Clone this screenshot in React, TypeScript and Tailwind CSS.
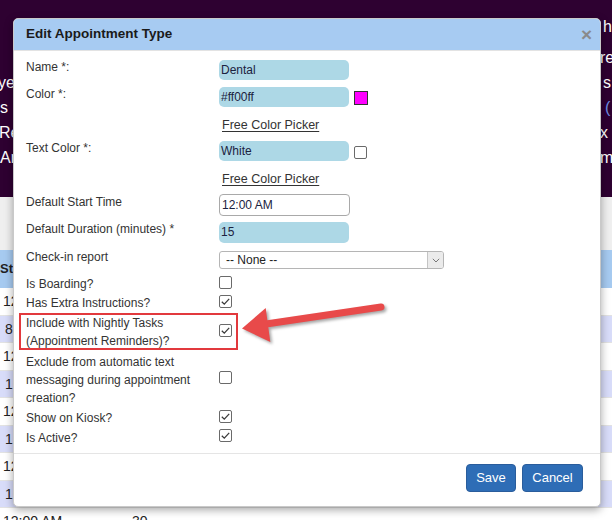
import React from 'react';

const Box: React.FC<{ checked?: boolean }> = ({ checked }) => (
    <svg width="13" height="13" viewBox="0 0 13 13" className="block">
        <rect x="0.5" y="0.5" width="12" height="12" rx="1.5" fill="#fff" stroke="#6a6a6a" />
        {checked && <path d="M2.8 6.7 L5.3 9.1 L10.2 3.9" fill="none" stroke="#3a3a3a" strokeWidth="1.3" />}
    </svg>
);

const Row: React.FC<{ label: React.ReactNode; h: string; children?: React.ReactNode }> = ({ label, h, children }) => (
    <div className={`flex items-start ${h}`}>
        <div className="w-[193px] shrink-0 text-[12px] leading-[18px] text-[#333]">{label}</div>
        {children}
    </div>
);

const PickerLink = () => (
    <div className="h-[27px] pl-[196px] pt-[4px]">
        <span className="block text-[12.5px] leading-[18px] text-[#333] underline underline-offset-2">Free Color Picker</span>
    </div>
);

const rows = ['12', '8', '12', '12', '12', '12', '12', '12'];

export default function App() {
    return (
        <div className="relative h-[520px] w-[612px] overflow-hidden bg-white font-['Liberation_Sans',Arial,sans-serif]">
            {/* page behind the dialog */}
            <div className="flex h-[197px] justify-between bg-[#2e0131] text-[16px] leading-[25px] text-white">
                <div className="w-[13px] overflow-hidden whitespace-nowrap pt-[70px]">
                    <div className="-ml-[2px]">yes</div>
                    <div>s</div>
                    <div className="-ml-[1px]">Re</div>
                    <div>An</div>
                </div>
                <div className="w-[11px] overflow-hidden whitespace-nowrap">
                    <div className="mt-[14px] pl-[2px]">h</div>
                    <div className="mt-[6px] -ml-[1px]">re</div>
                    <div className="pl-[2px]">s</div>
                    <div className="pl-[4px] text-[#6f8fe8]">(</div>
                    <div className="-ml-[1px]">x S</div>
                    <div className="-ml-[1px]">me</div>
                </div>
            </div>
            <div className="h-[53px] bg-[#efefef]" />
            <div className="h-[38px] bg-[#a6caf0] text-[13px] font-bold leading-[38px] text-[#222]">Status</div>
            {rows.map((r, i) => (
                <div
                    key={i}
                    className={`h-[27.5px] border-b border-[#e2e2e2] text-[14px] leading-[27px] text-[#222] ${i % 2 ? 'bg-[#d8dcf9] pl-[5px]' : 'bg-white pl-[3px]'}`}
                >
                    {r}
                </div>
            ))}
            <div className="flex pt-[4px] text-[14px] leading-[18px] text-[#222]">
                <span className="w-[132px] pl-[3px]">12:00 AM</span>
                <span>30</span>
            </div>

            {/* dialog */}
            <div className="absolute left-[13px] top-[18px] flex h-[489px] w-[588px] flex-col overflow-hidden rounded-[5px] border border-[#c9c9c9] bg-white shadow-[0_3px_8px_rgba(0,0,0,0.35)]">
                <div className="flex h-[32px] shrink-0 items-center justify-between border-b border-[#e3e3e3] bg-[#a7cbf2] pl-[12px] pr-[8px]">
                    <span className="text-[13.5px] font-bold text-[#1a1a1a]">Edit Appointment Type</span>
                    <span className="text-[19px] font-bold leading-none text-[#8a8a8a]">×</span>
                </div>

                <div className="flex-1 pl-[12px] pt-[7px]">
                    <Row h="h-[27px]" label="Name *:">
                        <div className="mt-[2px] h-[20px] w-[130px] rounded-[5px] bg-[#add8e6] pl-[2px] text-[12px] leading-[20px] text-[#1b2240]">Dental</div>
                    </Row>
                    <Row h="h-[27px]" label="Color *:">
                        <div className="mt-[2px] h-[20px] w-[130px] rounded-[5px] bg-[#add8e6] pl-[2px] text-[12px] leading-[20px] text-[#1b2240]">#ff00ff</div>
                        <div className="ml-[5px] mt-[6px] h-[14px] w-[14px] border border-[#333] bg-[#ff00ff]" />
                    </Row>
                    <PickerLink />
                    <Row h="h-[27px]" label="Text Color *:">
                        <div className="mt-[2px] h-[20px] w-[130px] rounded-[5px] bg-[#add8e6] pl-[2px] text-[12px] leading-[20px] text-[#1b2240]">White</div>
                        <div className="ml-[5px] mt-[7px]"><Box /></div>
                    </Row>
                    <PickerLink />
                    <Row h="h-[27px]" label="Default Start Time">
                        <div className="mt-[1px] h-[22px] w-[131px] rounded-[4px] border border-[#a9a9a9] bg-white pl-[2px] text-[12px] leading-[20px] text-[#1b2240]">12:00 AM</div>
                    </Row>
                    <Row h="h-[28px]" label="Default Duration (minutes) *">
                        <div className="mt-[2px] h-[21px] w-[130px] rounded-[5px] bg-[#add8e6] pl-[2px] text-[12px] leading-[21px] text-[#1b2240]">15</div>
                    </Row>
                    <Row h="h-[27px]" label="Check-in report">
                        <div className="mt-[3px] flex h-[18px] w-[225px] items-stretch overflow-hidden rounded-[3px] border border-[#b5b5b5] bg-white">
                            <span className="flex-1 pl-[6px] text-[12px] leading-[16px] text-[#222]">-- None --</span>
                            <span className="flex w-[16px] items-center justify-center border-l border-[#c4c4c4] bg-[#ebebeb]">
                                <svg width="8" height="5" viewBox="0 0 8 5">
                                    <path d="M0.8 0.8 L4 4 L7.2 0.8" fill="none" stroke="#777" strokeWidth="1" />
                                </svg>
                            </span>
                        </div>
                    </Row>
                    <Row h="h-[19px]" label="Is Boarding?">
                        <div className="mt-[1px]"><Box /></div>
                    </Row>
                    <Row h="h-[20px]" label="Has Extra Instructions?">
                        <div className="mt-[1px]"><Box checked /></div>
                    </Row>
                    <div className="relative">
                        <Row h="h-[39px]" label={<>Include with Nightly Tasks<br />(Appointment Reminders)?</>}>
                            <div className="mt-[10px]"><Box checked /></div>
                        </Row>
                        <div className="absolute -left-[7px] -top-[1px] h-[37px] w-[219px] border-2 border-[#e2393d]" />
                    </div>
                    <Row h="h-[56px]" label={<>Exclude from automatic text<br />messaging during appointment<br />creation?</>}>
                        <div className="mt-[18px]"><Box /></div>
                    </Row>
                    <Row h="h-[20px]" label="Show on Kiosk?">
                        <div className="mt-[1px]"><Box checked /></div>
                    </Row>
                    <Row h="h-[18px]" label="Is Active?">
                        <div><Box checked /></div>
                    </Row>
                </div>

                <div className="flex h-[53px] shrink-0 items-start justify-end gap-[6px] border-t border-[#e5e5e5] pr-[17px] pt-[10px]">
                    <button className="h-[28px] w-[50px] rounded-[4px] border border-[#2a5d9c] bg-[#2e6db6] text-[13px] text-white">Save</button>
                    <button className="h-[28px] w-[61px] rounded-[4px] border border-[#2a5d9c] bg-[#2e6db6] text-[13px] text-white">Cancel</button>
                </div>
            </div>

            {/* annotation arrow */}
            <svg
                className="pointer-events-none absolute left-[236px] top-[296px] drop-shadow-[2px_2px_1.5px_rgba(0,0,0,0.35)]"
                width="152"
                height="56"
                viewBox="0 0 152 56"
            >
                <line x1="145" y1="11" x2="30" y2="28" stroke="#e84a4a" strokeWidth="7" strokeLinecap="round" />
                <polygon points="6,32.6 29.7,12 34.3,46" fill="#e84a4a" />
            </svg>
        </div>
    );
}
